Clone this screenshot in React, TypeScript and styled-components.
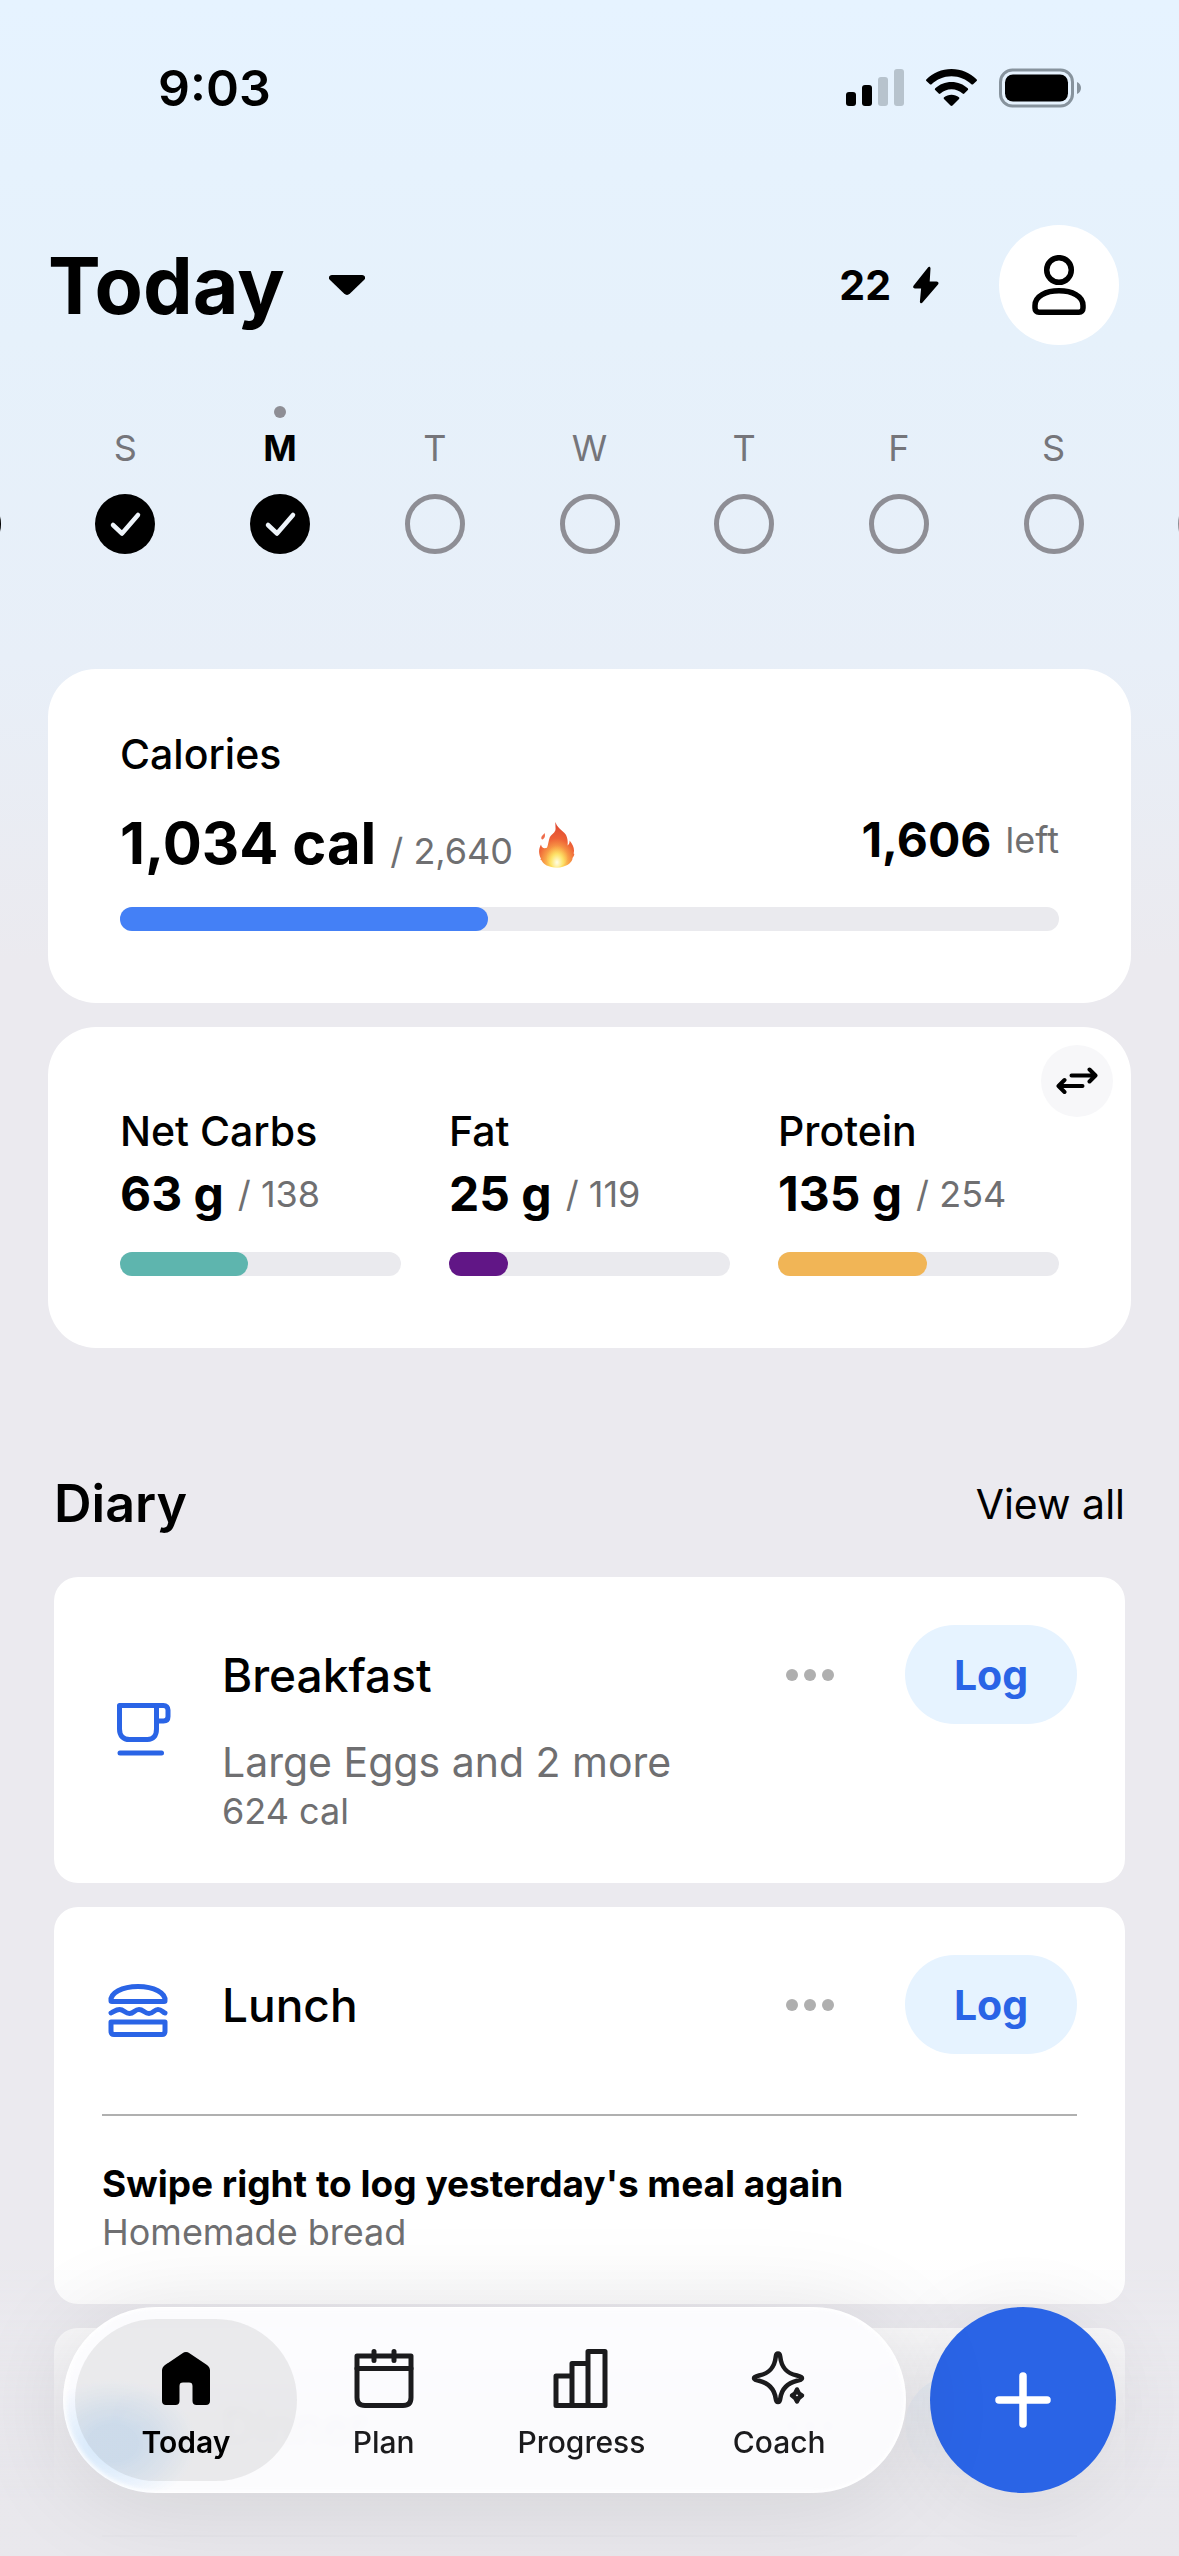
import React from "react";
import styled, { createGlobalStyle } from "styled-components";

const color = {
  ink: "#000000",
  soft: "#6f6f71",
  ring: "#8e8e95",
  track: "#eaeaee",
  page: "#ebeaef",
  blue: "#2a64e6",
  paleBlue: "#e6f3ff",
};

const GlobalStyle = createGlobalStyle`
  *, *::before, *::after { box-sizing: border-box; }
  html, body { margin: 0; background: ${color.page}; }
  body {
    font-family: Inter, Roboto, "Liberation Sans", sans-serif;
    color: ${color.ink};
    -webkit-font-smoothing: antialiased;
  }
  button { border: 0; padding: 0; background: none; font: inherit; color: inherit; cursor: pointer; }
  h1, h2, h3, p, ul, ol { margin: 0; padding: 0; font-weight: inherit; }
  li { list-style: none; }
  svg { display: block; flex: none; }
`;

const Shell = styled.div`
  height: 100vh;
  overflow: hidden;
  background: linear-gradient(${color.paleBlue} 0, #e6f1fb 340px, #e8eff8 660px, ${color.page} 960px);
`;

/* ---------- status bar ---------- */

const StatusBar = styled.div`
  display: flex;
  align-items: center;
  justify-content: space-between;
  height: 176px;
  padding: 0 98px 0 158px;
`;

const Clock = styled.time`
  font-size: 50px;
  line-height: 60px;
  font-weight: 600;
`;

const StatusIcons = styled.div`
  display: flex;
  align-items: center;
  gap: 22px;
`;

/* ---------- page header ---------- */

const Header = styled.header`
  display: flex;
  align-items: center;
  justify-content: space-between;
  height: 218px;
  padding: 0 60px 0 48px;
`;

const DayButton = styled.button`
  display: flex;
  align-items: center;
  gap: 44px;
`;

const PageTitle = styled.h1`
  font-size: 79px;
  line-height: 96px;
  font-weight: 700;
`;

const HeaderActions = styled.div`
  display: flex;
  align-items: center;
  gap: 60px;
`;

const Streak = styled.div`
  display: flex;
  align-items: center;
  gap: 22px;
  font-size: 41px;
  line-height: 50px;
  font-weight: 700;
`;

const Avatar = styled.button`
  display: grid;
  place-items: center;
  width: 120px;
  height: 120px;
  border-radius: 50%;
  background: #fff;
`;

/* ---------- week strip ---------- */

const Week = styled.ol`
  display: flex;
  justify-content: center;
  overflow: hidden;
  padding: 12px 0 115px;
`;

const Day = styled.li<{ $current?: boolean }>`
  display: flex;
  flex: 0 0 calc((100vw - 96px) / 7);
  flex-direction: column;
  align-items: center;
  font-size: 36px;
  line-height: 44px;
  font-weight: ${(p) => (p.$current ? 700 : 400)};
  color: ${(p) => (p.$current ? color.ink : "#75757a")};

  &::before {
    content: "";
    width: 12px;
    height: 12px;
    margin-bottom: 8px;
    border-radius: 50%;
    background: ${(p) => (p.$current ? color.ring : "transparent")};
  }
`;

const DayLabel = styled.span`
  height: 44px;
  margin-bottom: 24px;
`;

const DayMark = styled.span<{ $done?: boolean }>`
  display: grid;
  place-items: center;
  width: 60px;
  height: 60px;
  border: ${(p) => (p.$done ? "0" : `5px solid ${color.ring}`)};
  border-radius: 50%;
  background: ${(p) => (p.$done ? color.ink : "transparent")};
`;

/* ---------- nutrition cards ---------- */

const Nutrition = styled.section`
  display: grid;
  gap: 24px;
  padding: 0 48px;
`;

const Card = styled.div`
  position: relative;
  padding: 60px 72px 72px;
  border-radius: 48px;
  background: #fff;
`;

const MacroCard = styled(Card)`
  display: grid;
  grid-template-columns: repeat(3, 1fr);
  gap: 48px;
  padding-top: 79px;
`;

const Label = styled.h2`
  font-size: 41px;
  line-height: 50px;
  font-weight: 500;
`;

const CalorieRow = styled.div`
  display: flex;
  align-items: flex-start;
  justify-content: space-between;
  height: 72px;
  margin: 28px 0;
`;

const CalorieTotal = styled.p`
  display: flex;
  align-items: baseline;
  gap: 14px;
  height: 72px;
  line-height: 72px;
  white-space: nowrap;

  svg { align-self: center; margin: 4px 0 0 12px; }
`;

const Amount = styled.strong<{ $large?: boolean }>`
  font-size: ${(p) => (p.$large ? 58 : 48)}px;
  font-weight: 700;
`;

const Muted = styled.span`
  font-size: 36px;
  font-weight: 400;
  color: ${color.soft};
`;

const AmountRow = styled.p`
  display: flex;
  align-items: center;
  gap: 14px;
  line-height: 66px;
  white-space: nowrap;
`;

const MacroAmount = styled(AmountRow)`
  margin: 8px 0 28px;
  line-height: 60px;
`;

const Track = styled.div`
  height: 24px;
  border-radius: 12px;
  background: ${color.track};
`;

const Fill = styled.div<{ $color: string }>`
  height: 24px;
  border-radius: 12px;
  background: ${(p) => p.$color};
`;

const SwapButton = styled.button`
  position: absolute;
  top: 18px;
  right: 18px;
  display: grid;
  place-items: center;
  width: 72px;
  height: 72px;
  border-radius: 50%;
  background: #f7f7f9;
`;

/* ---------- diary ---------- */

const Diary = styled.section`
  padding: 126px 54px 0;
`;

const DiaryHeader = styled.div`
  display: flex;
  align-items: center;
  justify-content: space-between;
  margin-bottom: 43px;
  line-height: 60px;
`;

const DiaryTitle = styled.h2`
  font-size: 52px;
  font-weight: 600;
`;

const ViewAll = styled.a`
  font-size: 41px;
  color: inherit;
  text-decoration: none;
`;

const Meals = styled.div`
  display: grid;
  gap: 24px;
`;

const MealCard = styled.article`
  padding: 48px;
  border-radius: 24px;
  background: #fff;
`;

const MealMain = styled.div`
  display: flex;
  align-items: center;
  gap: 48px;
  color: ${color.blue};
`;

const MealBody = styled.div`
  flex: 1;
  min-width: 0;
  color: ${color.ink};
`;

const MealTop = styled.div`
  display: flex;
  align-items: center;
`;

const MealName = styled.h3`
  flex: 1;
  font-size: 46px;
  line-height: 60px;
  font-weight: 500;
`;

const MoreButton = styled.button`
  display: flex;
  gap: 6px;
  padding: 20px;
  margin-right: 51px;

  span {
    width: 12px;
    height: 12px;
    border-radius: 50%;
    background: #afafaf;
  }
`;

const LogButton = styled.button`
  width: 172px;
  height: 99px;
  border-radius: 50px;
  background: ${color.paleBlue};
  color: ${color.blue};
  font-size: 41px;
  font-weight: 700;
`;

const MealItems = styled.p`
  margin-top: 13px;
  font-size: 41px;
  line-height: 50px;
  color: ${color.soft};
`;

const MealNote = styled.p`
  font-size: 36px;
  line-height: 48px;
  color: ${color.soft};
`;

const Suggestion = styled.div`
  margin-top: 60px;
  padding-top: 44px;
  border-top: 2px solid #b0b0b0;
`;

const SuggestionTitle = styled.p`
  font-size: 37px;
  line-height: 48px;
  font-weight: 700;
`;

/* ---------- floating navigation ---------- */

const Dock = styled.div`
  position: fixed;
  right: 0;
  bottom: 0;
  left: 0;
  display: flex;
  gap: 24px;
  padding: 137px 63px 63px;
  background: linear-gradient(
    rgba(232, 231, 236, 0) 90px,
    rgba(232, 231, 236, 0.3) 160px,
    rgba(232, 231, 236, 0.85) 260px,
    rgba(232, 231, 236, 0.96) 330px
  );
`;

const TabBar = styled.nav`
  display: grid;
  grid-template-columns: repeat(4, 1fr);
  flex: 1;
  height: 186px;
  padding: 12px 28px 12px 24px;
  border-radius: 93px;
  background:
    radial-gradient(ellipse 84px 64px at 50px 136px, rgba(205, 228, 250, 0.7) 30%, rgba(205, 228, 250, 0) 100%),
    rgba(252, 252, 254, 0.93);
  box-shadow: inset 0 0 4px 2px #fff, 0 8px 100px rgba(0, 0, 0, 0.1);
  backdrop-filter: blur(4px);
`;

const Tab = styled.button<{ $active?: boolean }>`
  display: flex;
  flex-direction: column;
  align-items: center;
  gap: 15px;
  margin: 0 -12px;
  padding-top: 30px;
  border-radius: 81px;
  background: ${(p) => (p.$active ? "rgba(90, 90, 92, 0.11)" : "transparent")};
  color: ${(p) => (p.$active ? color.ink : "#1b1b1d")};
  font-size: 30px;
  line-height: 36px;
  font-weight: ${(p) => (p.$active ? 600 : 500)};
`;

const AddButton = styled.button`
  display: grid;
  place-items: center;
  width: 186px;
  height: 186px;
  border-radius: 50%;
  background: ${color.blue};
  box-shadow: 0 8px 80px rgba(0, 0, 0, 0.08);
`;

/* ---------- icons ---------- */

const SignalIcon = () => (
  <svg width="58" height="38" viewBox="0 0 58 38" aria-hidden="true">
    <rect x="0" y="23" width="10" height="14" rx="3" />
    <rect x="16" y="16" width="10" height="21" rx="3" />
    <rect x="32" y="8" width="10" height="29" rx="3" fill="#b7c3cd" />
    <rect x="48" y="0" width="10" height="37" rx="3" fill="#b7c3cd" />
  </svg>
);

const WifiIcon = () => (
  <svg width="51" height="38" viewBox="0 0 51 38" aria-hidden="true">
    <path d="M25.500 0.000C35.300 0.000 44.100 3.900 50.500 10.200C51.100 10.800 51.100 11.500 50.600 12.000L47.100 15.200C46.600 15.700 45.900 15.700 45.400 15.200C40.200 10.200 33.200 7.200 25.500 7.200C17.800 7.200 10.800 10.200 5.600 15.200C5.100 15.700 4.400 15.700 3.900 15.200L0.400 12.000C-0.100 11.500 -0.100 10.800 0.500 10.200C6.900 3.900 15.700 0.000 25.500 0.000Z" />
    <path d="M25.500 13C31.800 13 37.500 15.400 41.700 19.300C42.300 19.900 42.300 20.600 41.800 21.100L38.300 24.500C37.800 25 37.100 25 36.600 24.500C33.600 21.900 29.800 20.300 25.500 20.300C21.200 20.300 17.400 21.900 14.400 24.500C13.900 25 13.200 25 12.700 24.500L9.200 21.100C8.700 20.600 8.700 19.900 9.300 19.300C13.500 15.400 19.200 13 25.500 13Z" />
    <path d="M25.500 25.800C28.300 25.800 30.900 26.700 32.900 28.300C33.500 28.800 33.500 29.500 33 30L26.500 36.500C25.900 37.100 25.100 37.100 24.500 36.500L18 30C17.500 29.500 17.500 28.800 18.100 28.300C20.100 26.700 22.700 25.800 25.500 25.800Z" />
  </svg>
);

const BatteryIcon = () => (
  <svg width="82" height="40" viewBox="0 0 82 40" aria-hidden="true">
    <rect x="1.500" y="2" width="72" height="36" rx="12" fill="none" stroke="#87939d" strokeWidth="3" />
    <rect x="6" y="6.500" width="63" height="27" rx="8" />
    <path d="M78 14C80.700 15.200 82 17.500 82 20S80.700 24.800 78 26Z" fill="#87939d" />
  </svg>
);

const CaretIcon = () => (
  <svg width="36" height="20" viewBox="0 0 36 20" aria-hidden="true">
    <path d="M3 0H33C36 0 37 3 35 5L21 18.500C19 20.400 17 20.400 15 18.500L1 5C-1 3 0 0 3 0Z" />
  </svg>
);

const BoltIcon = () => (
  <svg width="26" height="38" viewBox="0 0 26 38" aria-hidden="true">
    <path d="M15 1.400C16 .2 17.600 .9 17.500 2.500L16.700 15.500H23.500C25.400 15.500 26 17.200 25 18.500L9.500 36.500C8.500 37.700 6.800 37.100 6.900 35.500L8.100 22.500H2C.2 22.500-.4 20.700.7 19.400Z" />
  </svg>
);

const PersonIcon = () => (
  <svg width="60" height="60" viewBox="0 0 60 60" fill="none" stroke="#000" strokeWidth="5.500" aria-hidden="true">
    <circle cx="30" cy="15" r="12.300" />
    <path d="M6 50.500C6 41 17 35.700 30 35.700S54 41 54 50.500V53C54 55.500 52.500 57.200 50 57.200H10C7.500 57.200 6 55.500 6 53Z" strokeLinejoin="round" />
  </svg>
);

const CheckIcon = () => (
  <svg width="60" height="60" viewBox="0 0 60 60" aria-hidden="true">
    <path d="M18 31L27 39.500L43 21" fill="none" stroke="#eef4fa" strokeWidth="4.500" strokeLinecap="round" strokeLinejoin="round" />
  </svg>
);

const FlameIcon = () => (
  <svg width="36" height="46" viewBox="0 0 36 46" role="img" aria-label="On fire">
    <defs>
      <radialGradient id="flame" cx="0.5" cy="0.92" r="0.85">
        <stop offset="0" stopColor="#fffbd0" />
        <stop offset="0.18" stopColor="#fde05f" />
        <stop offset="0.4" stopColor="#f9a348" />
        <stop offset="0.66" stopColor="#ee6237" />
        <stop offset="1" stopColor="#df4a31" />
      </radialGradient>
      <radialGradient id="flameCore" cx="0.5" cy="0.85" r="0.6">
        <stop offset="0" stopColor="#fffde6" />
        <stop offset="0.5" stopColor="#fde56a" stopOpacity="0.85" />
        <stop offset="1" stopColor="#fbb24a" stopOpacity="0" />
      </radialGradient>
    </defs>
    <path d="M16.500 0C17.500 4.500 22 7.500 25.500 11C28.500 14.300 29 18.500 28.600 23.500C30.300 22.500 30.700 20.500 30.600 18.500C34 22.500 35.900 27 34.600 31.500C36 31.500 35 34.500 33.500 36C33.800 40.500 26.500 45.700 18 45.700C10 45.700 3.500 42 2.800 38.500C1.500 38 .9 37 2 36.800C-.6 31.500 -.5 27 2 22.500C2.600 26 5 27 8 25.800C9.500 22 9.500 18.500 10.800 15.300C12 12.300 15.200 11.500 16.300 8.500C17 6 16 3 16.500 0Z" fill="url(#flame)" />
    <path d="M5.500 11C6.500 13.500 6 15.500 4.500 16.800C3.500 18 2 17.300 2.300 15.500C2.600 13.500 4.500 13 5.500 11Z" fill="#ee6b4a" />
    <path d="M18 16C20 22 29 26 28.500 35C28 41.500 23.500 44.700 18 44.700S7.500 41.500 7.500 35C7.500 28 16.500 24 18 16Z" fill="url(#flameCore)" />
  </svg>
);

const SwapIcon = () => (
  <svg width="42" height="28" viewBox="0 0 42 28" fill="none" stroke="#000" strokeWidth="4" strokeLinecap="round" strokeLinejoin="round" aria-hidden="true">
    <path d="M15.500 8.500H39M33.500 2.500L39.500 8.500L33.500 14.500" />
    <path d="M26.500 19H3M8.500 13L2.500 19L8.500 25" />
  </svg>
);

const CupIcon = () => (
  <svg width="72" height="72" viewBox="0 0 72 72" fill="none" stroke="currentColor" strokeWidth="5" strokeLinecap="round" strokeLinejoin="round" aria-hidden="true">
    <path d="M17.500 11.500H54.500V35C54.500 42 51 45.500 45.500 45.500H27.500C21 45.500 17.500 41.500 17.500 35Z" />
    <path d="M54.500 11.500H61.500C64.300 11.500 66 13.500 66 16V22.500C66 25.500 64.300 27 61.500 27H54.500" />
    <path d="M18 59H59.500" />
  </svg>
);

const BurgerIcon = () => (
  <svg width="72" height="72" viewBox="0 0 72 72" fill="none" stroke="currentColor" strokeWidth="5" strokeLinecap="round" strokeLinejoin="round" aria-hidden="true">
    <path d="M9 32C8 24 20 17.500 36 17.500S64 24 63 32C63 32.500 62.500 32.500 62 32.500H10C9.500 32.500 9 32.500 9 32Z" />
    <path d="M9 44C12 43 13.500 40.500 17.500 40.500C22 40.500 23 44.500 27.500 44.500S32.500 40.500 37 40.500S42.500 44.500 47 44.500S52 40.500 56 40.500C59.500 40.500 60.500 43 63 44" />
    <path d="M9 53H63V62C63 64 62 65.500 60 65.500H12C10 65.500 9 64 9 62Z" />
  </svg>
);

const MoonIcon = () => (
  <svg width="72" height="72" viewBox="0 0 72 72" fill="none" stroke="currentColor" strokeWidth="5" strokeLinecap="round" strokeLinejoin="round" aria-hidden="true">
    <path d="M12 36A24 24 0 0 1 60 36Z" />
    <path d="M6 48H66" />
  </svg>
);

const HomeIcon = () => (
  <svg width="60" height="60" viewBox="0 0 60 60" fill="currentColor" aria-hidden="true">
    <path d="M26.500 4.200C28.700 2.500 31.300 2.500 33.500 4.200L51 16C53 17.500 54 19.200 54 21.500V52C54 54.600 52.500 56 50 56H40.500C38 56 36.500 54.600 36.500 52V37C36.500 34.600 35.400 33.500 33 33.500H27C24.600 33.500 23.500 34.600 23.500 37V52C23.500 54.600 22 56 19.500 56H10C7.500 56 6 54.600 6 52V21.500C6 19.200 7 17.500 9 16Z" />
  </svg>
);

const PlanIcon = () => (
  <svg width="60" height="60" viewBox="0 0 60 60" fill="none" stroke="currentColor" strokeWidth="5" strokeLinejoin="round" strokeLinecap="round" aria-hidden="true">
    <path d="M3 7H57V48.500C57 54 54 56.500 49 56.500H11C6 56.500 3 54 3 48.500Z" />
    <path d="M3 19.500H57M20 2.500V11.500M40 2.500V11.500" />
  </svg>
);

const ProgressIcon = () => (
  <svg width="56" height="60" viewBox="0 0 56 60" fill="none" stroke="currentColor" strokeWidth="5" strokeLinejoin="round" aria-hidden="true">
    <path d="M3 27H19V56.500H3ZM19 14.500H35V56.500H19ZM35 2.500H52V56.500H35Z" />
  </svg>
);

const CoachIcon = () => (
  <svg width="56" height="60" viewBox="0 0 56 60" fill="none" stroke="currentColor" strokeWidth="4.500" strokeLinejoin="round" aria-hidden="true">
    <path d="M27 4.500C28.600 4.500 29 5.800 29.200 7.500C30.300 17.500 34.500 24 46 26.500C49.500 27.300 51 27.800 51 29.200S49.500 31 46 31.800C34.500 34.500 30.300 41.500 29.200 50C29 51.700 28.600 53 27 53S25 51.700 24.800 50C23.700 41.500 19.500 34.500 8 31.800C4.500 31 3 30.600 3 29.200S4.500 27.300 8 26.500C19.500 24 23.700 17.500 24.800 7.500C25 5.800 25.400 4.500 27 4.500Z" />
    <path d="M46 40.500C46.800 43.500 48 45 51 46.500C48 48 46.800 49.500 46 52.500C45.200 49.500 44 48 41 46.500C44 45 45.200 43.500 46 40.500Z" strokeWidth="4.500" />
  </svg>
);

const PlusIcon = () => (
  <svg width="56" height="56" viewBox="0 0 56 56" fill="none" stroke="#fff" strokeWidth="7.500" strokeLinecap="round" aria-hidden="true">
    <path d="M28 4V52M4 28H52" />
  </svg>
);

/* ---------- data ---------- */

type WeekDay = { label: string; done?: boolean; current?: boolean; edge?: boolean };

const week: WeekDay[] = [
  { label: "", done: true, edge: true },
  { label: "S", done: true },
  { label: "M", done: true, current: true },
  { label: "T" },
  { label: "W" },
  { label: "T" },
  { label: "F" },
  { label: "S" },
  { label: "", edge: true },
];

const macros = [
  { name: "Net Carbs", value: 63, goal: 138, color: "#5eb5ae" },
  { name: "Fat", value: 25, goal: 119, color: "#611686" },
  { name: "Protein", value: 135, goal: 254, color: "#f1b556" },
];

type MealProps = {
  icon: React.ReactNode;
  name: string;
  items?: string;
  calories?: string;
  children?: React.ReactNode;
};

function Progress({ value, goal, color: fill, name }: { value: number; goal: number; color: string; name: string }) {
  return (
    <Track role="progressbar" aria-label={name} aria-valuenow={value} aria-valuemin={0} aria-valuemax={goal}>
      <Fill $color={fill} style={{ width: `${(value / goal) * 100}%` }} />
    </Track>
  );
}

function Meal({ icon, name, items, calories, children }: MealProps) {
  return (
    <MealCard>
      <MealMain>
        {icon}
        <MealBody>
          <MealTop>
            <MealName>{name}</MealName>
            <MoreButton aria-label={`More options for ${name}`}>
              <span />
              <span />
              <span />
            </MoreButton>
            <LogButton>Log</LogButton>
          </MealTop>
          {items && <MealItems>{items}</MealItems>}
          {calories && <MealNote>{calories}</MealNote>}
        </MealBody>
      </MealMain>
      {children}
    </MealCard>
  );
}

export default function App() {
  return (
    <Shell>
      <GlobalStyle />
      <StatusBar>
        <Clock>9:03</Clock>
        <StatusIcons>
          <SignalIcon />
          <WifiIcon />
          <BatteryIcon />
        </StatusIcons>
      </StatusBar>

      <Header>
        <DayButton>
          <PageTitle>Today</PageTitle>
          <CaretIcon />
        </DayButton>
        <HeaderActions>
          <Streak>
            22
            <BoltIcon />
          </Streak>
          <Avatar aria-label="Profile">
            <PersonIcon />
          </Avatar>
        </HeaderActions>
      </Header>

      <main>
        <Week>
          {week.map((day, i) => (
            <Day key={i} $current={day.current} aria-hidden={day.edge}>
              <DayLabel>{day.label}</DayLabel>
              <DayMark $done={day.done}>{day.done && <CheckIcon />}</DayMark>
            </Day>
          ))}
        </Week>

        <Nutrition>
          <Card>
            <Label>Calories</Label>
            <CalorieRow>
              <CalorieTotal>
                <Amount $large>1,034 cal</Amount>
                <Muted>/ 2,640</Muted>
                <FlameIcon />
              </CalorieTotal>
              <AmountRow>
                <Amount>1,606</Amount>
                <Muted>left</Muted>
              </AmountRow>
            </CalorieRow>
            <Progress name="Calories" value={1034} goal={2640} color="#4480f6" />
          </Card>

          <MacroCard>
            {macros.map((m) => (
              <div key={m.name}>
                <Label>{m.name}</Label>
                <MacroAmount>
                  <Amount>{m.value} g</Amount>
                  <Muted>/ {m.goal}</Muted>
                </MacroAmount>
                <Progress {...m} />
              </div>
            ))}
            <SwapButton aria-label="Switch macro view">
              <SwapIcon />
            </SwapButton>
          </MacroCard>
        </Nutrition>

        <Diary>
          <DiaryHeader>
            <DiaryTitle>Diary</DiaryTitle>
            <ViewAll href="#diary">View all</ViewAll>
          </DiaryHeader>
          <Meals>
            <Meal icon={<CupIcon />} name="Breakfast" items="Large Eggs and 2 more" calories="624 cal" />
            <Meal icon={<BurgerIcon />} name="Lunch">
              <Suggestion>
                <SuggestionTitle>Swipe right to log yesterday's meal again</SuggestionTitle>
                <MealNote>Homemade bread</MealNote>
              </Suggestion>
            </Meal>
            <Meal icon={<MoonIcon />} name="Dinner">
              <Suggestion />
            </Meal>
          </Meals>
        </Diary>
      </main>

      <Dock>
        <TabBar>
          <Tab $active aria-current="page">
            <HomeIcon />
            Today
          </Tab>
          <Tab>
            <PlanIcon />
            Plan
          </Tab>
          <Tab>
            <ProgressIcon />
            Progress
          </Tab>
          <Tab>
            <CoachIcon />
            Coach
          </Tab>
        </TabBar>
        <AddButton aria-label="Add entry">
          <PlusIcon />
        </AddButton>
      </Dock>
    </Shell>
  );
}
